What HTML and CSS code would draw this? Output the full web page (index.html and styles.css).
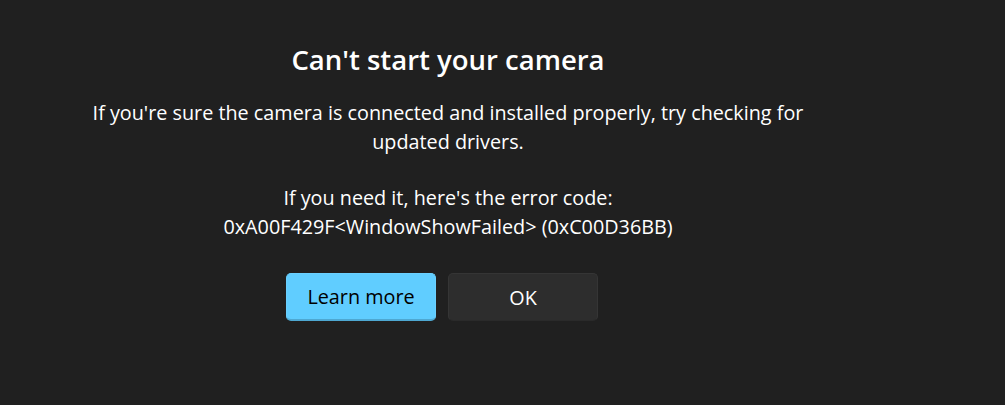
FILE: index.html
```html
<!DOCTYPE html>
<html lang="en">
<head>
<meta charset="utf-8">
<title>Camera</title>
<link rel="stylesheet" href="styles.css">
</head>
<body>
<main class="dialog">
  <h1 class="title">Can't start your camera</h1>
  <p class="message intro">If you're sure the camera is connected and installed properly, try checking for updated drivers.</p>
  <p class="message code">If you need it, here's the error code:<br>0xA00F429F&lt;WindowShowFailed&gt; (0xC00D36BB)</p>
  <div class="actions">
    <button class="btn btn-primary">Learn more</button>
    <button class="btn btn-secondary">OK</button>
  </div>
</main>
</body>
</html>
```
FILE: styles.css
```css
html, body {
  margin: 0;
  padding: 0;
  background: #202020;
  height: 100%;
}
body {
  font-family: "Open Sans", "Noto Sans", sans-serif;
  color: #ffffff;
}
.dialog {
  width: 730px;
  margin-left: 83px;
  padding-top: 42px;
  display: flex;
  flex-direction: column;
  align-items: center;
  text-align: center;
}
.title {
  margin: 0;
  font-size: 27.5px;
  font-weight: 600;
  line-height: 36px;
}
.message {
  margin: 0;
  font-size: 19.8px;
  line-height: 29px;
}
.intro {
  margin-top: 20px;
}
.code {
  margin-top: 28px;
  line-height: 28.5px;
}
.actions {
  display: flex;
  gap: 12px;
  margin-top: 32px;
  margin-left: -12px;
}
.btn {
  width: 150px;
  height: 48px;
  border-radius: 5px;
  font-family: inherit;
  font-size: 19.8px;
  cursor: pointer;
  box-sizing: border-box;
}
.btn-primary {
  background: #60cdff;
  color: #000000;
  border: 1px solid #6ad0ff;
  border-bottom: 2px solid #4ea8d2;
}
.btn-secondary {
  background: #2d2d2d;
  color: #ffffff;
  border: 1px solid #353535;
  border-bottom-color: #2a2a2a;
}
```
